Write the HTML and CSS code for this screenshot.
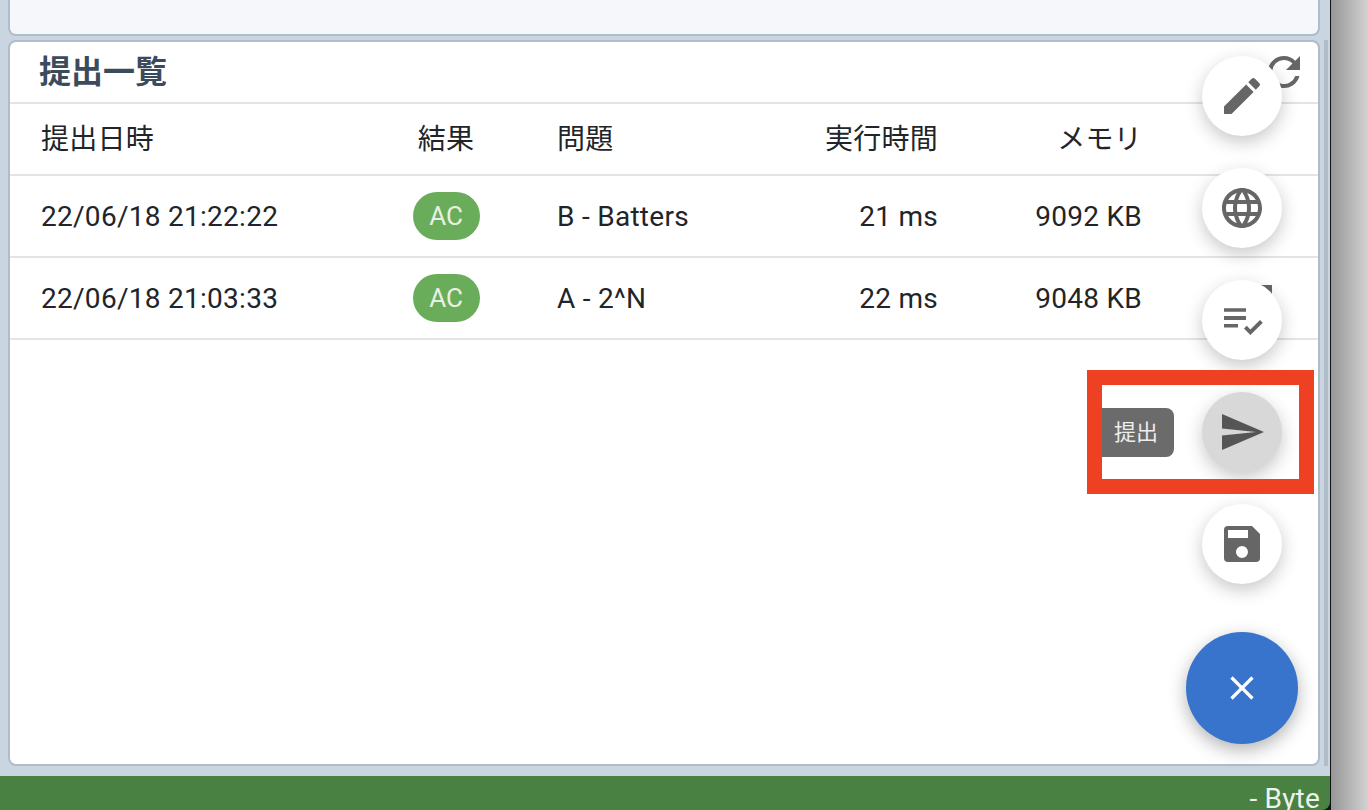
FILE: index.html
```html
<!DOCTYPE html>
<html lang="ja">
<head>
  <meta charset="UTF-8">
  <title>提出一覧</title>
  <link rel="stylesheet" href="styles.css">
</head>
<body>
  <div class="app">
    <main class="content">
      <div class="panel-top"></div>

      <section class="card">
        <header class="card-head">
          <h2>提出一覧</h2>
          <svg class="reload" viewBox="0 0 24 24"><path d="M17.65 6.35A7.96 7.96 0 0 0 12 4a8 8 0 1 0 7.73 10h-2.08A6 6 0 1 1 12 6c1.66 0 3.14.69 4.22 1.78L13 11h7V4l-2.35 2.35z"/></svg>
        </header>

        <div class="row row-head">
          <div class="c-date">提出日時</div>
          <div class="c-result">結果</div>
          <div class="c-task">問題</div>
          <div class="c-time">実行時間</div>
          <div class="c-mem">メモリ</div>
        </div>
        <div class="row">
          <div class="c-date">22/06/18 21:22:22</div>
          <div class="c-result"><span class="badge">AC</span></div>
          <div class="c-task">B - Batters</div>
          <div class="c-time">21 ms</div>
          <div class="c-mem">9092 KB</div>
          <span class="row-mark"></span>
        </div>
        <div class="row">
          <div class="c-date">22/06/18 21:03:33</div>
          <div class="c-result"><span class="badge">AC</span></div>
          <div class="c-task">A - 2^N</div>
          <div class="c-time">22 ms</div>
          <div class="c-mem">9048 KB</div>
          <span class="row-mark"></span>
        </div>

        <div class="fab-list">
          <button class="fab"><svg viewBox="0 0 24 24"><path d="M3 17.25V21h3.75L17.81 9.94l-3.75-3.75L3 17.25zM20.71 7.04a1 1 0 0 0 0-1.41l-2.34-2.34a1 1 0 0 0-1.41 0l-1.83 1.83 3.75 3.75 1.83-1.83z"/></svg></button>
          <button class="fab"><svg viewBox="0 0 24 24"><path d="M11.99 2C6.47 2 2 6.48 2 12s4.47 10 9.99 10C17.52 22 22 17.52 22 12S17.52 2 11.99 2zm6.93 6h-2.95a15.65 15.65 0 0 0-1.38-3.56A8.03 8.03 0 0 1 18.92 8zM12 4.04c.83 1.2 1.48 2.53 1.91 3.96h-3.82c.43-1.43 1.08-2.76 1.91-3.96zM4.26 14C4.1 13.36 4 12.69 4 12s.1-1.36.26-2h3.38c-.08.66-.14 1.32-.14 2 0 .68.06 1.34.14 2H4.26zm.82 2h2.95c.32 1.25.78 2.45 1.38 3.56A7.987 7.987 0 0 1 5.08 16zm2.95-8H5.08a7.987 7.987 0 0 1 4.33-3.56A15.65 15.65 0 0 0 8.03 8zM12 19.96c-.83-1.2-1.48-2.53-1.91-3.96h3.82c-.43 1.43-1.08 2.76-1.91 3.96zM14.34 14H9.66c-.09-.66-.16-1.32-.16-2 0-.68.07-1.35.16-2h4.68c.09.65.16 1.32.16 2 0 .68-.07 1.34-.16 2zm.25 5.56c.6-1.11 1.06-2.31 1.38-3.56h2.95a8.03 8.03 0 0 1-4.33 3.56zM16.36 14c.08-.66.14-1.32.14-2 0-.68-.06-1.34-.14-2h3.38c.16.64.26 1.31.26 2s-.1 1.36-.26 2h-3.38z"/></svg></button>
          <button class="fab"><svg viewBox="0 0 24 24"><path d="M3 6.1h11v1.8H3zM3 10h11v2H3zM3 14h7v1.8H3zM21 12l1.4 1.4-6.2 6.1-3.2-3.2 1.4-1.4 1.8 1.8z"/></svg></button>
          <div class="fab-row">
            <span class="fab-label">提出</span>
            <button class="fab is-active"><svg viewBox="0 0 24 24"><path d="M2 3 23 12 2 21v-7.3l17-1.7-17-1.7z"/></svg></button>
          </div>
          <button class="fab"><svg viewBox="0 0 24 24"><path d="M17 3H5a2 2 0 0 0-2 2v14a2 2 0 0 0 2 2h14a2 2 0 0 0 2-2V7l-4-4zm-5 16a3 3 0 1 1 0-6 3 3 0 0 1 0 6zm3-10H5V5h10v4z"/></svg></button>
          <button class="fab-main"><svg viewBox="0 0 24 24"><path d="M19 6.41 17.59 5 12 10.59 6.41 5 5 6.41 10.59 12 5 17.59 6.41 19 12 13.41 17.59 19 19 17.59 13.41 12z"/></svg></button>
        </div>
      </section>

      <div class="side-strip"></div>
      <div class="highlight"></div>
    </main>
    <footer class="footer">- Byte</footer>
  </div>
  <div class="side"></div>
</body>
</html>
```

FILE: styles.css
```css
html, body {
  height: 100%;
}

body {
  margin: 0;
  display: flex;
  overflow: hidden;
  background: #d2d2d2;
  font-family: Roboto, "Noto Sans CJK JP", sans-serif;
  color: #212529;
}

.app {
  width: 1330px;
  height: 810px;
  flex: none;
  display: flex;
  flex-direction: column;
  background: linear-gradient(#c9d5e0 calc(100% - 10px), #111 0);
  position: relative;
  border-right: 1px solid #111;
}

.content {
  flex: 1;
  min-height: 0;
  padding: 0 10px 10px 8px;
  display: flex;
  flex-direction: column;
  gap: 4px;
  background: #c9d5e0;
}

.panel-top {
  height: 36px;
  flex: none;
  box-sizing: border-box;
  background: #f5f7fa;
  border: solid #b0bcc8;
  border-width: 0 2px 2px 2px;
  border-radius: 0 0 8px 8px;
}

.card {
  flex: 1;
  position: relative;
  box-sizing: border-box;
  background: #fff;
  border: 2px solid #b0bcc8;
  border-radius: 8px;
}

.card-head {
  height: 62px;
  box-sizing: border-box;
  display: flex;
  align-items: center;
  justify-content: space-between;
  padding: 0 10px 6px 29px;
  border-bottom: 2px solid #e2e4e6;
}

.card-head h2 {
  margin: 0;
  font-size: 32px;
  font-weight: 700;
  color: #3c4b5c;
}

.reload {
  width: 48px;
  height: 48px;
  margin-top: 6px;
  fill: #666;
}

.row {
  height: 82px;
  box-sizing: border-box;
  display: flex;
  align-items: center;
  padding: 0 30px 0 31px;
  border-bottom: 2px solid #e2e4e6;
  font-size: 28px;
  letter-spacing: 0.28px;
  position: relative;
}

.row-head {
  height: 72px;
  padding-bottom: 5px;
}

.c-date { width: 337px; }
.c-result { width: 136px; text-align: center; }
.c-task { width: 236px; padding-left: 43px; }
.c-time { width: 145px; text-align: right; }
.c-mem { width: 204px; text-align: right; }

.badge {
  display: inline-block;
  width: 67px;
  height: 48px;
  line-height: 48px;
  border-radius: 24px;
  background: #69ad5a;
  color: #e8f0e4;
  font-size: 26px;
  letter-spacing: 0;
  text-align: center;
}

.row-mark {
  position: absolute;
  right: 46px;
  top: 27px;
  width: 12px;
  height: 14px;
  background: #666;
}

.fab-list {
  position: absolute;
  top: 14px;
  right: 36px;
  display: flex;
  flex-direction: column;
  align-items: flex-end;
  gap: 32px;
}

.fab,
.fab-main {
  padding: 0;
  border: none;
  border-radius: 50%;
  display: flex;
  align-items: center;
  justify-content: center;
}

.fab {
  width: 80px;
  height: 80px;
  background: #fff;
  box-shadow: 0 6px 18px rgba(0, 0, 0, 0.22);
}

.fab svg {
  width: 48px;
  height: 48px;
  fill: #666;
}

.fab.is-active {
  background: #d8d8d8;
}

.fab.is-active svg {
  fill: #555;
}

.fab-row {
  display: flex;
  align-items: center;
  gap: 28px;
}

.fab-label {
  width: 73px;
  height: 49px;
  line-height: 49px;
  box-sizing: border-box;
  padding-left: 13px;
  border-radius: 0 8px 8px 0;
  background: #6b6b6b;
  color: #eee;
  font-size: 22px;
}

.fab-main {
  width: 112px;
  height: 112px;
  margin: 16px -16px 0 0;
  background: #3873cc;
  box-shadow: 0 6px 18px rgba(0, 0, 0, 0.3);
}

.fab-main svg {
  width: 40px;
  height: 40px;
  fill: #fff;
}

.side-strip {
  position: absolute;
  left: 1324px;
  top: 40px;
  width: 4px;
  height: 726px;
  background: #b0bcc8;
}

.highlight {
  position: absolute;
  left: 1087px;
  top: 370px;
  width: 227px;
  height: 124px;
  box-sizing: border-box;
  border: 15px solid #ee4123;
}

.footer {
  height: 34px;
  flex: none;
  box-sizing: border-box;
  overflow: hidden;
  background: #498143;
  color: #eef2ec;
  font-size: 28px;
  letter-spacing: 0.2px;
  line-height: 46px;
  text-align: right;
  padding-right: 10px;
  border-bottom-right-radius: 8px;
}

.side {
  flex: 1;
  background: linear-gradient(90deg, #979797, #d2d2d2);
}
```
